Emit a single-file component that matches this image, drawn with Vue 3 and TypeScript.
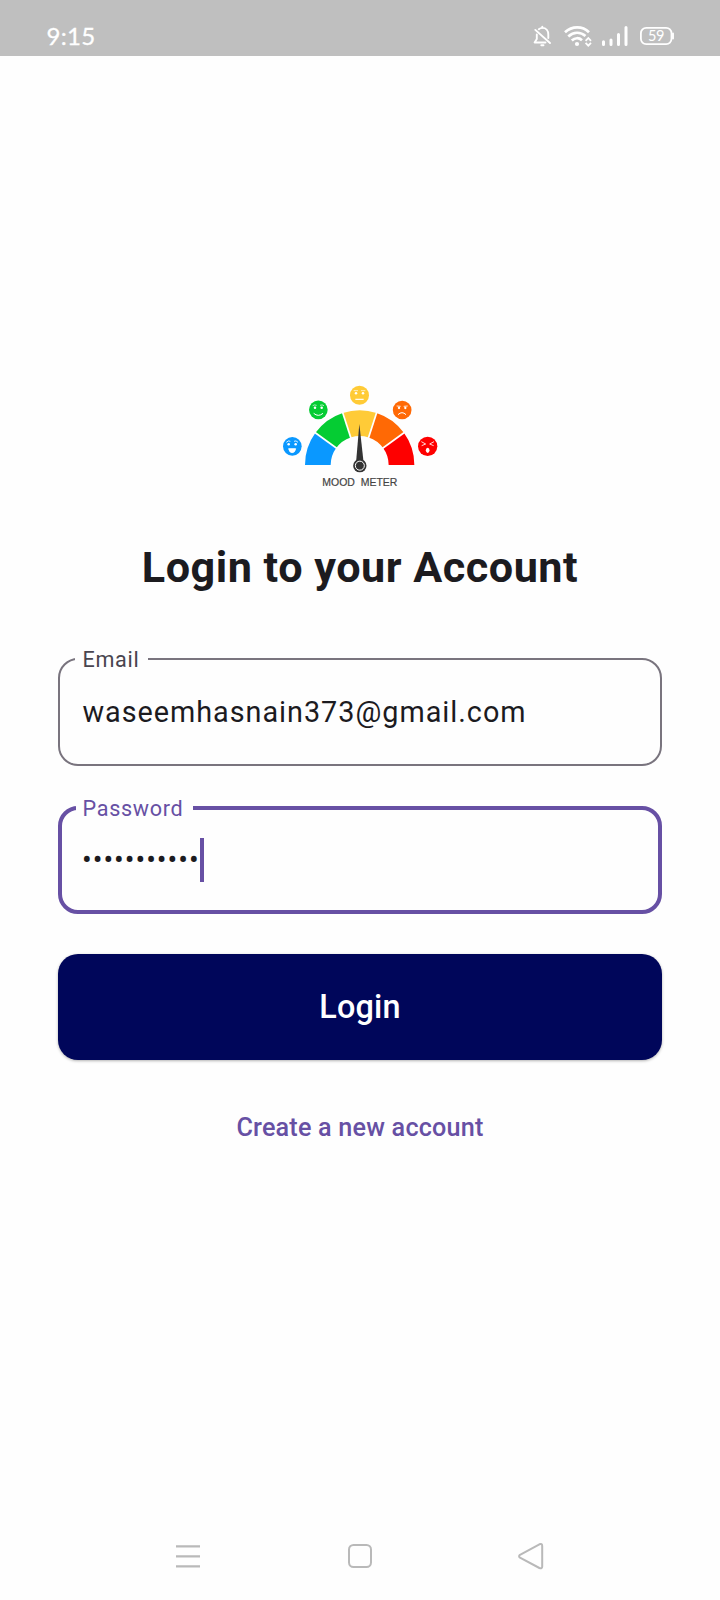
<script setup lang="ts">
import { ref } from 'vue'

interface Segment {
  color: string
  d: string
}

const cx = 269
const cy = 270
const outer = 164
const inner = 87
const colors: string[] = ['#0a98ff', '#05cc33', '#ffcb37', '#ff6905', '#fe0000']

function point(radius: number, degrees: number): string {
  const a = (degrees * Math.PI) / 180
  return `${(cx - radius * Math.cos(a)).toFixed(2)} ${(cy - radius * Math.sin(a)).toFixed(2)}`
}

const segments: Segment[] = colors.map((color, i) => {
  const from = i * 36
  const to = from + 36
  return {
    color,
    d: `M${point(outer, from)}A${outer} ${outer} 0 0 1 ${point(outer, to)}L${point(inner, to)}A${inner} ${inner} 0 0 0 ${point(inner, from)}Z`,
  }
})

const dividers: string[] = [36, 72, 108, 144].map((a) => `M${point(inner - 3, a)}L${point(outer + 3, a)}`)

const email = ref('waseemhasnain373@gmail.com')
const password = ref('•'.repeat(11))
</script>

<template>
  <div class="screen">
    <header class="status">
      <span class="clock">9:15</span>
      <svg class="indicators" viewBox="0 0 170 30" width="170" height="30" fill="none" stroke="#fff">
        <g stroke-width="1.9" stroke-linecap="round" stroke-linejoin="round">
          <path d="M18.800 9.200C20 8.200 21.200 7.900 22.300 7.900C26.300 7.900 28.300 11 28.300 14.500V18" />
          <path d="M16.800 14.500V19L14.600 22.500H25.500" />
          <path d="M15.300 9.900L30 23" />
          <path d="M22.300 6.600V7.500M21.300 25.200H23.500" />
        </g>
        <g stroke-width="2.700">
          <path d="M45 12.200C52 5.700 62.500 5.700 69 12.200" />
          <path d="M48.300 16.500C53.500 11.600 60.500 11.600 65.500 16" />
          <path d="M51.800 20.500C55 17.500 59 17.500 62 20.300" />
        </g>
        <circle cx="57" cy="24" r="2.100" fill="#fff" stroke="none" />
        <path d="M65.600 20.800L68.300 18L71 20.800M65.600 22.900L68.300 25.700L71 22.900" stroke-width="1.800" />
        <g stroke-width="3" stroke-linecap="round">
          <path d="M83.500 21.800V24.500M91 20V24.500M98.500 14.500V24.500M106 7.500V24.500" />
        </g>
        <rect x="120.900" y="7.900" width="30.600" height="16.200" rx="5.300" stroke-width="1.800" />
        <path d="M153 13.500V18.500" stroke-width="1.900" stroke-linecap="round" />
        <text x="136" y="20.700" class="charge" text-anchor="middle">59</text>
      </svg>
    </header>

    <main class="content">
      <svg class="logo" viewBox="0 0 540 360" width="180" height="120" role="img" aria-label="Mood meter">
        <path v-for="s in segments" :key="s.color" :d="s.d" :fill="s.color" />
        <path v-for="d in dividers" :key="d" :d="d" stroke="#fff" stroke-width="5" />
        <path d="M268 147L258 264H281Z" fill="#333" />
        <circle cx="269.500" cy="272" r="20" fill="#333" />
        <circle cx="269.500" cy="272" r="13.500" fill="none" stroke="#fff" stroke-width="3" />

        <circle cx="67" cy="214" r="28" fill="#0a98ff" />
        <g fill="none" stroke="#fff" stroke-width="2.500">
          <path d="M49 202Q55 195 61 199M72 199Q78 195 84 202" />
          <path d="M56 221H77Q75 233 66.500 233T56 221Z" fill="#fff" />
        </g>
        <circle cx="56" cy="208" r="3.800" fill="#fff" />
        <circle cx="77" cy="208" r="3.800" fill="#fff" />

        <circle cx="145" cy="104.500" r="28" fill="#05cc33" />
        <g fill="none" stroke="#fff" stroke-width="3">
          <path d="M128 92Q133 88 140 91M150 91Q157 88 162 92" stroke-width="2" />
          <path d="M131 115Q145 127 159 115" />
        </g>
        <circle cx="135" cy="98" r="3.800" fill="#fff" />
        <circle cx="155" cy="98" r="3.800" fill="#fff" />

        <circle cx="268.500" cy="61" r="28.500" fill="#ffcb37" />
        <path d="M251 47H264M273 47H286" stroke="#fff" stroke-width="2" />
        <path d="M256 73H281" stroke="#fff" stroke-width="3.500" />
        <circle cx="258" cy="55" r="3.800" fill="#fff" />
        <circle cx="279" cy="55" r="3.800" fill="#fff" />

        <circle cx="396.500" cy="105" r="28" fill="#ff6905" />
        <g fill="none" stroke="#fff" stroke-width="3">
          <path d="M380 93L392 94M401 94L413 93" stroke-width="2.500" />
          <path d="M384 119Q396 107 408 119" />
        </g>
        <circle cx="387" cy="99" r="3.500" fill="#fff" />
        <circle cx="406" cy="99" r="3.500" fill="#fff" />

        <circle cx="473" cy="214" r="29" fill="#fe0000" />
        <g fill="none" stroke="#fff" stroke-width="2.500">
          <path d="M454 200L467 207L455 212M492 200L479 207L491 212" />
        </g>
        <ellipse cx="473" cy="226" rx="5.500" ry="8" fill="#fff" />
        <text class="wordmark" x="157" y="333" textLength="225" lengthAdjust="spacingAndGlyphs">MOOD&nbsp; METER</text>
      </svg>

      <h1 class="title">Login to your Account</h1>

      <fieldset class="field">
        <legend class="label">Email</legend>
        <div class="value">{{ email }}</div>
      </fieldset>

      <fieldset class="field focused">
        <legend class="label">Password</legend>
        <div class="value"><span class="dots">{{ password }}</span><span class="caret"></span></div>
      </fieldset>

      <button class="login" type="button">Login</button>
      <a class="create">Create a new account</a>
    </main>

    <nav class="navbar">
      <svg width="28" height="28" viewBox="0 0 28 28" fill="none" stroke="#b9b9b9" stroke-width="2.300">
        <path d="M2 4.400H26M2 14.400H26M2 24.400H26" />
      </svg>
      <svg width="28" height="28" viewBox="0 0 28 28" fill="none" stroke="#b9b9b9" stroke-width="2">
        <rect x="3" y="3" width="22" height="22" rx="4.500" />
      </svg>
      <svg width="28" height="28" viewBox="0 0 28 28" fill="none" stroke="#b9b9b9" stroke-width="2" stroke-linejoin="round">
        <path d="M2 12.800L21.400 2.300Q24.200 1.300 24.200 4V24.500Q24.200 27 21.400 26L2 15.600Q0.200 14.200 2 12.800Z" />
      </svg>
    </nav>
  </div>
</template>

<style>
body {
  margin: 0;
  background: #fff;
}
</style>

<style scoped>
.screen {
  width: 720px;
  height: 1600px;
  box-sizing: border-box;
  display: flex;
  flex-direction: column;
  overflow: hidden;
  background: #fefefe;
  font-family: Roboto, "Liberation Sans", sans-serif;
  color: #1c1b1f;
}
.status {
  flex: none;
  box-sizing: border-box;
  height: 56px;
  background: #bfbfbf;
  display: flex;
  justify-content: space-between;
  padding: 20px 30px 0 46.5px;
}
.clock {
  margin-top: 1px;
  font: 24px/30px Lato, sans-serif;
  letter-spacing: 0.3px;
  color: #fff;
  -webkit-text-stroke: 0.3px #fff;
}
.indicators {
  flex: none;
}
.charge {
  font: 14.5px Lato, sans-serif;
  letter-spacing: -0.5px;
  fill: #fff;
  stroke: none;
}
.content {
  flex: 1;
  display: flex;
  flex-direction: column;
  align-items: center;
  padding: 319px 58px 0;
}
.logo {
  flex: none;
}
.wordmark {
  font: 33px "Liberation Sans", Arial, sans-serif;
  fill: #444;
  stroke: #444;
  stroke-width: 0.6px;
}
.title {
  margin: 43px 0 0;
  font-size: 43.2px;
  line-height: 60px;
  height: 60px;
  font-weight: 700;
  letter-spacing: 0.5px;
  white-space: nowrap;
}
.field {
  box-sizing: border-box;
  width: 604px;
  height: 119px;
  min-width: 0;
  margin: 49px 0 0;
  padding: 0 0 0 15px;
  border: 2px solid #79747e;
  border-radius: 20px;
}
.label {
  height: 24px;
  padding: 0 8.5px 0 7.5px;
  font-size: 21.6px;
  line-height: 26px;
  letter-spacing: 0.7px;
  color: #49454f;
}
.value {
  display: flex;
  align-items: center;
  height: 44px;
  margin-top: 19px;
  padding-left: 7.4px;
  font-size: 28.8px;
  line-height: 44px;
  letter-spacing: 0.98px;
}
.field.focused {
  height: 118px;
  margin-top: 30px;
  border: 4px solid #6750a4;
  padding-left: 14px;
}
.focused .label {
  padding-left: 6.5px;
  padding-right: 9.5px;
  color: #6750a4;
}
.focused .value {
  padding-left: 6px;
  margin-top: 18px;
}
.caret {
  width: 4px;
  height: 44px;
  background: #6750a4;
}
.login {
  flex: none;
  width: 604px;
  height: 106px;
  margin-top: 40px;
  padding: 0;
  border: 0;
  border-radius: 20px;
  background: #00065a;
  box-shadow: 0 1px 3px rgba(0, 0, 0, 0.3);
  color: #fff;
  font: 500 32.4px/106px Roboto, sans-serif;
  letter-spacing: 0.2px;
}
.create {
  margin-top: 52px;
  font-size: 25.2px;
  line-height: 32px;
  font-weight: 500;
  letter-spacing: 0.2px;
  color: #6750a4;
}
.navbar {
  flex: none;
  display: flex;
  justify-content: space-between;
  padding: 0 174px 30px;
  height: 28px;
}
</style>
